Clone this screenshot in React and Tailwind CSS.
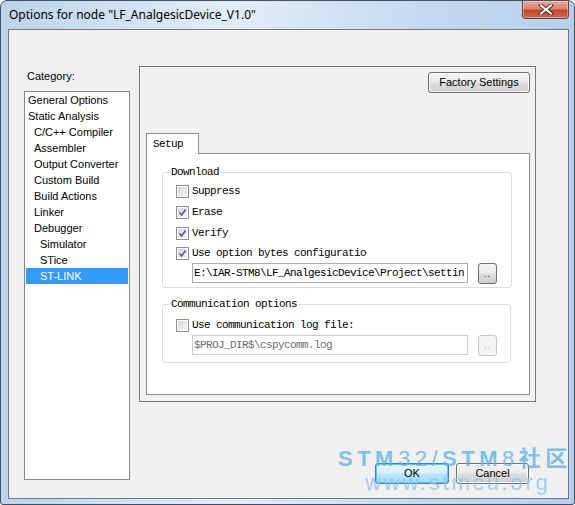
import React from "react";

const ui = { fontFamily: '"Liberation Sans", Arial, sans-serif' };
const mono = { fontFamily: '"Liberation Mono", "Courier New", monospace' };

const categories = [
  { label: "General Options", level: 0 },
  { label: "Static Analysis", level: 0 },
  { label: "C/C++ Compiler", level: 1 },
  { label: "Assembler", level: 1 },
  { label: "Output Converter", level: 1 },
  { label: "Custom Build", level: 1 },
  { label: "Build Actions", level: 1 },
  { label: "Linker", level: 1 },
  { label: "Debugger", level: 1 },
  { label: "Simulator", level: 2 },
  { label: "STice", level: 2 },
  { label: "ST-LINK", level: 2, selected: true },
];

const indent = ["pl-[2px]", "pl-[8px]", "pl-[14px]"];

const CheckBox = ({ checked, disabled }) => (
  <div
    className={`w-[13px] h-[13px] border shrink-0 p-[1px] ${
      disabled ? "border-[#b1b1b1]" : "border-[#8e8f8f]"
    }`}
  >
    <div className="w-full h-full bg-[linear-gradient(135deg,#d6d6d6,#f7f7f7)] relative">
      {checked && (
        <svg width="9" height="9" viewBox="0 0 9 9" className="absolute left-0 top-0">
          <path d="M1.5 4.5 L3.6 7 L7.6 1.6" fill="none" stroke="#4b5f99" strokeWidth="1.7" />
        </svg>
      )}
    </div>
  </div>
);

const CheckRow = ({ label, checked, disabled }) => (
  <div className="flex items-center gap-[3px]">
    <CheckBox checked={checked} disabled={disabled} />
    <span className="text-[11px] tracking-[-0.6px] leading-none" style={mono}>
      {label}
    </span>
  </div>
);

const PushButton = ({ children, className = "" }) => (
  <div
    className={`flex items-center justify-center rounded-[3px] border border-[#707070] bg-[linear-gradient(#f2f2f2_0%,#ebebeb_48%,#dddddd_52%,#cfcfcf_100%)] text-[11px] text-black shadow-[inset_0_0_0_1px_#fcfcfc] ${className}`}
    style={ui}
  >
    {children}
  </div>
);

const BrowseButton = ({ disabled }) => (
  <div
    className={`w-[19px] h-[21px] rounded-[3px] border flex items-end justify-center pb-[4px] ${
      disabled
        ? "border-[#c2c6c9] bg-[#f4f4f4] text-[#a0a0a0]"
        : "border-[#707070] bg-[linear-gradient(#f2f2f2_0%,#ebebeb_48%,#dddddd_52%,#cfcfcf_100%)] text-black"
    }`}
  >
    <span className="text-[9px] leading-none tracking-[1px]" style={ui}>
      ..
    </span>
  </div>
);

const GroupBox = ({ title, className = "", children }) => (
  <div className={`relative border border-[#d5dfe5] rounded-[3px] ${className}`}>
    <span
      className="absolute -top-[7px] left-[7px] px-[1px] bg-white text-[11px] tracking-[-0.6px] leading-[12px]"
      style={mono}
    >
      {title}
    </span>
    {children}
  </div>
);

export default function App() {
  return (
    <div className="w-[575px] h-[505px] bg-white relative overflow-hidden">
      <div className="w-[575px] h-[505px] border border-[#44515f] rounded-t-[7px] rounded-b-[3px] bg-[linear-gradient(90deg,#bcd3ec_0%,#d3e4f6_25%,#e2edf9_40%,#cadef2_65%,#b5cfeb_100%)] flex flex-col">
        {/* title bar */}
        <div className="h-[28px] flex justify-between shrink-0">
          <span className="self-center pl-[8px] pb-[1px] text-[12px] text-black" style={{ fontFamily: '"Noto Sans", "Liberation Sans", sans-serif' }}>
            Options for node "LF_AnalgesicDevice_V1.0"
          </span>
          <div className="mr-[5px] w-[47px] h-[18px] rounded-b-[4px] border border-t-0 border-[#7a3b33] bg-[linear-gradient(#e9a99c_0%,#d88373_45%,#c4442c_55%,#d06a52_100%)] shadow-[inset_0_0_0_1px_rgba(255,255,255,0.35)] flex items-center justify-center">
            <svg width="16" height="11" viewBox="0 0 16 11">
              <path d="M3 1.5 L13 9.5 M13 1.5 L3 9.5" stroke="#4a2a2a" strokeWidth="4" strokeLinecap="square" />
              <path d="M3 1.5 L13 9.5 M13 1.5 L3 9.5" stroke="#ffffff" strokeWidth="2" strokeLinecap="square" />
            </svg>
          </div>
        </div>

        {/* client area */}
        <div className="ml-[7px] mr-[5px] h-[470px] border border-[#6f7b88] bg-[#f0f0f0] flex relative">
          <div className="ml-[15px] pt-[39px] flex flex-col">
            <span className="h-[14px] leading-[14px] pl-[3px] text-[11px] text-black" style={ui}>
              Category:
            </span>
            <div className="mt-[8px] w-[106px] h-[389px] border border-[#828790] bg-white">
              {categories.map((c) => (
                <div
                  key={c.label}
                  className={`mx-[1px] h-[16px] leading-[16px] text-[11px] ${indent[c.level]} ${
                    c.selected ? "bg-[#3399ff] text-white" : "text-black"
                  }`}
                  style={ui}
                >
                  {c.label}
                </div>
              ))}
            </div>
          </div>

          <div className="ml-[9px] pt-[36px] flex flex-col">
            <div className="w-[397px] h-[336px] border border-[#7a7a7a] flex flex-col">
              <div className="flex justify-end pt-[5px] pr-[5px]">
                <PushButton className="w-[102px] h-[21px]">Factory Settings</PushButton>
              </div>

              <div className="ml-[6px] mt-[40px] flex flex-col">
                <div className="relative z-10 -mb-px w-[53px] h-[21px] border border-b-0 border-[#898c95] bg-white pl-[6px] flex items-center">
                  <span className="text-[11px] tracking-[-0.6px]" style={mono}>
                    Setup
                  </span>
                </div>
                <div className="w-[384px] h-[242px] border border-[#898c95] bg-white flex flex-col">
                  <GroupBox title="Download" className="ml-[15px] mt-[18px] w-[350px] h-[116px]">
                    <div className="pt-[8px] pl-[13px]">
                      <div className="h-[21px] flex items-center">
                        <CheckRow label="Suppress" />
                      </div>
                      <div className="h-[21px] flex items-center">
                        <CheckRow label="Erase" checked />
                      </div>
                      <div className="h-[21px] flex items-center">
                        <CheckRow label="Verify" checked />
                      </div>
                      <div className="h-[19px] flex items-center">
                        <CheckRow label="Use option bytes configuratio" checked />
                      </div>
                    </div>
                    <div className="ml-[29px] flex items-start gap-[10px]">
                      <div
                        className="w-[276px] h-[20px] border border-[#abadb3] bg-white pl-[1px] flex items-center text-[11px] tracking-[-0.6px] text-black whitespace-nowrap overflow-hidden"
                        style={mono}
                      >
                        E:\IAR-STM8\LF_AnalgesicDevice\Project\settin
                      </div>
                      <BrowseButton />
                    </div>
                  </GroupBox>

                  <GroupBox title="Communication options" className="ml-[15px] mt-[16px] w-[349px] h-[59px]">
                    <div className="pt-[11px] pl-[13px] h-[30px] flex items-center">
                      <CheckRow label="Use communication log file:" />
                    </div>
                    <div className="ml-[29px] flex items-start gap-[10px]">
                      <div
                        className="w-[276px] h-[20px] border border-[#c9cbce] bg-white pl-[1px] flex items-center text-[11px] tracking-[-0.6px] text-[#6d6d6d] whitespace-nowrap overflow-hidden"
                        style={mono}
                      >
                        $PROJ_DIR$\cspycomm.log
                      </div>
                      <BrowseButton disabled />
                    </div>
                  </GroupBox>
                </div>
              </div>
            </div>

            <div className="mt-[61px] pr-[7px] flex justify-end gap-[7px]">
              <div
                className="w-[74px] h-[21px] rounded-[3px] border border-[#3c7fb1] bg-[linear-gradient(#eaf6fd_0%,#d9f0fc_48%,#bee6fd_52%,#a7d9f5_100%)] shadow-[inset_0_0_0_1px_#48d1f8] flex items-center justify-center text-[11px] text-black"
                style={ui}
              >
                OK
              </div>
              <PushButton className="w-[73px] h-[21px]">Cancel</PushButton>
            </div>
          </div>

          {/* site watermark */}
          <div className="absolute left-[329px] top-[415px] pointer-events-none select-none leading-none">
            <div className="text-[22px] tracking-[4.5px] text-[#62b2e6]/80 whitespace-nowrap" style={ui}>
              <span className="font-bold">STM</span>
              <span>32/</span>
              <span className="font-bold">STM</span>
              <span>8</span>
              <span className="font-bold" style={{ fontFamily: '"Noto Sans CJK SC", sans-serif' }}>社区</span>
            </div>
            <div className="mt-[2px] ml-[27px] text-[22px] tracking-[2.8px] text-[#8ec6ec]/80 whitespace-nowrap" style={ui}>
              www.stmcu.org
            </div>
          </div>
        </div>
      </div>
    </div>
  );
}
